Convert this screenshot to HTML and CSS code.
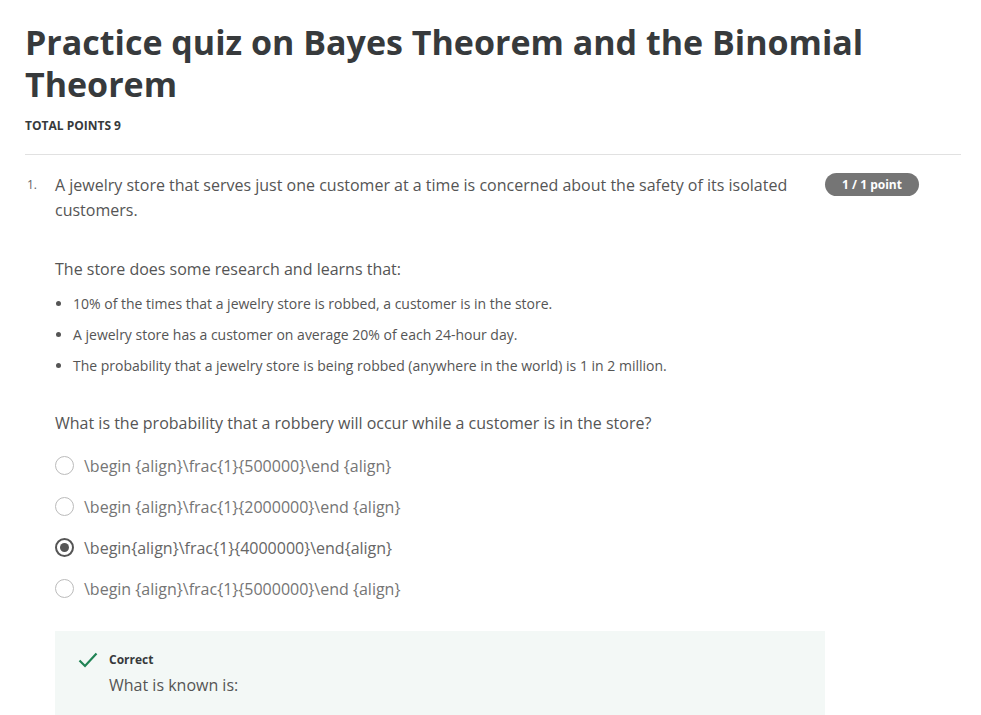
FILE: index.html
```html
<!DOCTYPE html>
<html>
<head>
<meta charset="utf-8">
<link rel="stylesheet" href="styles.css">
</head>
<body>
<div class="page">
  <h1 class="title">Practice quiz on Bayes Theorem and the Binomial Theorem</h1>
  <div class="total">TOTAL POINTS 9</div>
  <hr class="rule">
  <div class="question">
    <div class="num">1.</div>
    <div class="qbody">
      <div class="qhead">
        <p class="qtext">A jewelry store that serves just one customer at a time is concerned about the safety of its isolated customers.</p>
        <span class="badge">1 / 1 point</span>
      </div>
      <p class="para">The store does some research and learns that:</p>
      <ul class="facts">
        <li>10% of the times that a jewelry store is robbed, a customer is in the store.</li>
        <li>A jewelry store has a customer on average 20% of each 24-hour day.</li>
        <li>The probability that a jewelry store is being robbed (anywhere in the world) is 1 in 2 million.</li>
      </ul>
      <p class="prompt">What is the probability that a robbery will occur while a customer is in the store?</p>
      <div class="options">
        <div class="opt"><span class="radio"></span><span class="otext">\begin {align}\frac{1}{500000}\end {align}</span></div>
        <div class="opt"><span class="radio"></span><span class="otext">\begin {align}\frac{1}{2000000}\end {align}</span></div>
        <div class="opt"><span class="radio checked"></span><span class="otext sel">\begin{align}\frac{1}{4000000}\end{align}</span></div>
        <div class="opt"><span class="radio"></span><span class="otext">\begin {align}\frac{1}{5000000}\end {align}</span></div>
      </div>
      <div class="feedback">
        <svg class="check" width="20" height="16" viewBox="0 0 20 16"><path d="M1.5 8.5 L7 14 L18.5 1.5" fill="none" stroke="#1f8354" stroke-width="2.2"/></svg>
        <div class="fbody">
          <div class="fhead">Correct</div>
          <div class="ftext">What is known is:</div>
        </div>
      </div>
    </div>
  </div>
</div>
</body>
</html>
```
FILE: styles.css
```css
* { box-sizing: border-box; }
html, body { margin: 0; padding: 0; background: #fff; }
body { font-family: "Open Sans", "Liberation Sans", sans-serif; color: #555; overflow: hidden; }
.page { padding: 21px 20px 0 25px; }
.title {
  margin: 0;
  font-size: 34px;
  line-height: 42px;
  font-weight: 700;
  color: #373a3c;
  width: 880px;
}
.total {
  margin-top: 13px;
  font-size: 12px;
  font-weight: 700;
  color: #373a3c;
  line-height: 16px;
}
.rule { margin: 20px 0 0 0; border: 0; border-top: 1px solid #e1e1e1; }
.question { display: flex; margin-top: 18px; }
.num { width: 30px; font-size: 12px; color: #666; padding-top: 3px; padding-left: 2px; }
.qbody { flex: 1; }
.qhead { display: flex; align-items: flex-start; }
.qtext { margin: 0; width: 750px; font-size: 16px; line-height: 25px; color: #555; }
.badge {
  margin-left: 20px;
  margin-top: 0;
  background: #757575;
  color: #fff;
  font-size: 12px;
  font-weight: 700;
  border-radius: 12px;
  height: 23px;
  line-height: 23px;
  width: 94px;
  text-align: center;
}
.para { margin: 34px 0 0 0; font-size: 16px; line-height: 25px; color: #555; }
.facts { margin: 12px 0 0 0; padding-left: 18px; font-size: 14px; color: #555; }
.facts li { line-height: 19px; margin-bottom: 12px; }
.prompt { margin: 36px 0 0 0; font-size: 16px; line-height: 25px; color: #555; }
.options { margin-top: 9px; }
.opt { display: flex; align-items: center; height: 41px; }
.radio {
  width: 19px; height: 19px; border-radius: 50%;
  border: 1px solid #bbb; background: #fff; flex: none;
  position: relative;
}
.radio.checked { border: 2px solid #555; }
.radio.checked::after {
  content: ""; position: absolute; left: 3px; top: 3px;
  width: 9px; height: 9px; border-radius: 50%; background: #555;
}
.otext { margin-left: 10px; font-size: 16px; color: #757575; }
.otext.sel { color: #666; }
.feedback {
  margin-top: 22px;
  width: 770px;
  background: #f3f8f6;
  display: flex;
  padding: 21px 22px 20px 23px;
  height: 90px;
}
.check { margin-top: 0; flex: none; }
.fbody { margin-left: 11px; }
.fhead { font-size: 12px; font-weight: 700; color: #373a3c; line-height: 16px; }
.ftext { margin-top: 5px; font-size: 16px; color: #555; line-height: 24px; }
```
